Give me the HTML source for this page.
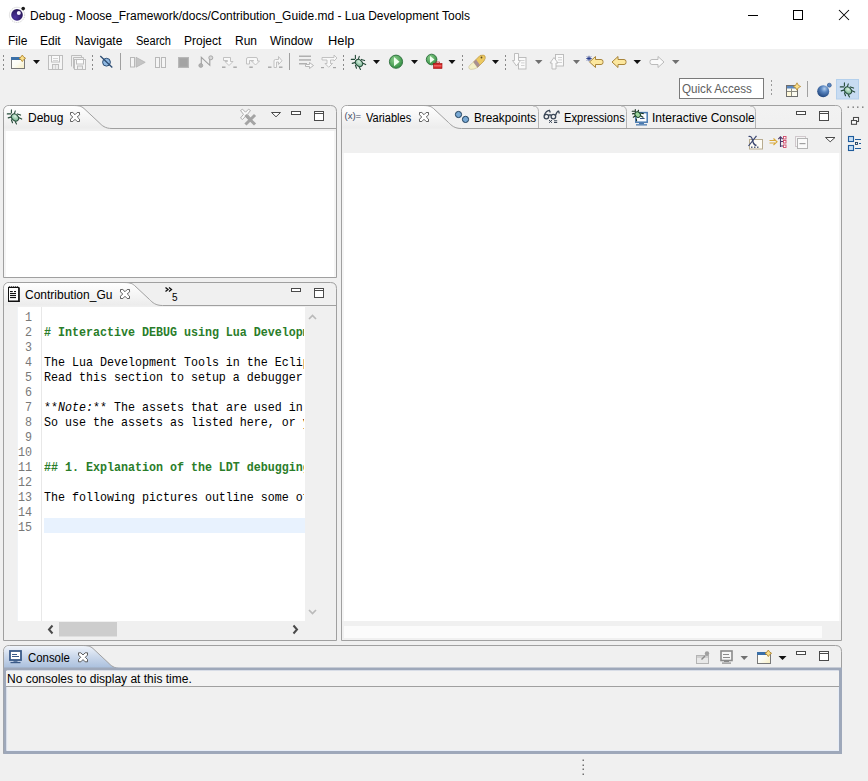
<!DOCTYPE html>
<html><head><meta charset="utf-8">
<style>
*{box-sizing:border-box;margin:0;padding:0}
html,body{width:868px;height:781px;overflow:hidden}
body{position:relative;background:#f0f0f0;font-family:"Liberation Sans",sans-serif;font-size:12px;color:#000}
.t{position:absolute;white-space:nowrap;line-height:1;transform-origin:0 0;z-index:2}
#g{position:absolute;left:0;top:0;z-index:1}
.ln{left:18px;width:14px;text-align:right;color:#787878}.tx{left:44px;width:259.8px;overflow:hidden}.h{color:#2a7d2a;font-weight:bold}
.m{font-family:"Liberation Mono",monospace;font-size:11.67px;position:absolute;white-space:pre;line-height:13.043px;z-index:2;transform:scaleY(1.15);transform-origin:0 0}
</style></head><body>
<svg id="g" width="868" height="781" viewBox="0 0 868 781">
<defs>
 <linearGradient id="tabsel" x1="0" y1="0" x2="0" y2="1">
  <stop offset="0" stop-color="#ffffff"/><stop offset="1" stop-color="#ececec"/>
 </linearGradient>
 <linearGradient id="tabun" x1="0" y1="0" x2="0" y2="1">
  <stop offset="0" stop-color="#f2f2f2"/><stop offset="1" stop-color="#f0f0f0"/>
 </linearGradient>
 <linearGradient id="tabblue" x1="0" y1="0" x2="0" y2="1">
  <stop offset="0" stop-color="#f0f4fa"/><stop offset="0.4" stop-color="#d0dced"/><stop offset="1" stop-color="#a8bedc"/>
 </linearGradient>
 <linearGradient id="newwin" x1="0" y1="0" x2="1" y2="1">
  <stop offset="0" stop-color="#ffffff"/><stop offset="0.5" stop-color="#fbfbf4"/><stop offset="1" stop-color="#f8eec0"/>
 </linearGradient>
 <radialGradient id="greenball" cx="0.4" cy="0.35" r="0.7">
  <stop offset="0" stop-color="#8fd08f"/><stop offset="1" stop-color="#2e8b3e"/>
 </radialGradient>
 <radialGradient id="bugbody" cx="0.4" cy="0.35" r="0.7">
  <stop offset="0" stop-color="#d8f0e0"/><stop offset="1" stop-color="#6fb08a"/>
 </radialGradient>
 <radialGradient id="blueball" cx="0.35" cy="0.3" r="0.75">
  <stop offset="0" stop-color="#a8c8ec"/><stop offset="1" stop-color="#2f5f9f"/>
 </radialGradient>
</defs>

<!-- title + menu white -->
<rect x="0" y="0" width="868" height="49" fill="#ffffff"/>

<!-- ============ DEBUG PANEL ============ -->
<path d="M3.5 277.5 V111.5 Q3.5 105.5 9.5 105.5 H330.5 Q336.5 105.5 336.5 111.5 V277.5 Z" fill="#f0f0f0" stroke="#a0a0a0"/>
<path d="M4 128.5 V111.5 Q4 106 9.5 106 H72 C79.0 105.5 81.0 106.0 84.0 108.5 L99.0 122.5 C102.0 125.5 105.0 128.5 112.0 128.5 Z" fill="url(#tabsel)"/>
<rect x="4" y="131" width="332" height="146" fill="#f5f5f5"/><rect x="6" y="131" width="328" height="146" fill="#ffffff"/>
<path d="M72 105.5 C79.0 105.5 81.0 106.0 84.0 108.5 L99.0 122.5 C102.0 125.5 105.0 128.5 112.0 128.5 H336" fill="none" stroke="#a0a0a0"/>

<!-- ============ EDITOR PANEL ============ -->
<path d="M3.5 640.5 V288.5 Q3.5 282.5 9.5 282.5 H330.5 Q336.5 282.5 336.5 288.5 V640.5 Z" fill="#f0f0f0" stroke="#a0a0a0"/>
<path d="M4 305.5 V288.5 Q4 283 9.5 283 H122.5 C129.5 282.5 131.5 283.0 134.5 285.5 L149.5 299.5 C152.5 302.5 155.5 305.5 162.5 305.5 Z" fill="url(#tabsel)"/>
<path d="M122.5 282.5 C129.5 282.5 131.5 283.0 134.5 285.5 L149.5 299.5 C152.5 302.5 155.5 305.5 162.5 305.5 H336" fill="none" stroke="#a0a0a0"/>
<rect x="17" y="307" width="288" height="314" fill="#ffffff"/>
<rect x="41" y="307" width="1" height="314" fill="#e8e8e8"/>
<rect x="17" y="307" width="1" height="314" fill="#f0f3f6"/>
<rect x="44" y="518" width="261" height="15" fill="#e8f2fe"/>

<!-- ============ VARIABLES PANEL ============ -->
<path d="M341.5 640.5 V111.5 Q341.5 105.5 347.5 105.5 H835.5 Q841.5 105.5 841.5 111.5 V640.5 Z" fill="#f0f0f0" stroke="#a0a0a0"/>
<path d="M342 128 H841 V111.5 Q841 106 835.5 106 H347.5 Q342 106 342 111.5 Z" fill="url(#tabun)"/>
<path d="M342 128.5 V111.5 Q342 106 347.5 106 H421.5 C428.5 105.5 430.5 106.0 433.5 108.5 L448.5 122.5 C451.5 125.5 454.5 128.5 461.5 128.5 Z" fill="url(#tabsel)"/>
<path d="M421.5 105.5 C428.5 105.5 430.5 106.0 433.5 108.5 L448.5 122.5 C451.5 125.5 454.5 128.5 461.5 128.5 H841" fill="none" stroke="#a0a0a0"/>
<path d="M533 106 Q538.5 106 538.5 111.5 V128" fill="none" stroke="#b4b4b4"/>
<path d="M621 106 Q626.5 106 626.5 111.5 V128" fill="none" stroke="#b4b4b4"/>
<path d="M750 106 Q755.5 106 755.5 111.5 V128" fill="none" stroke="#b4b4b4"/>
<rect x="342" y="153" width="499" height="468" fill="#f5f5f5"/><rect x="344" y="153" width="495" height="468" fill="#ffffff"/>
<rect x="344" y="626" width="478" height="12" fill="#fbfbfb"/>

<!-- ============ CONSOLE PANEL ============ -->
<path d="M3.5 753.5 V651.5 Q3.5 645.5 9.5 645.5 H835.5 Q841.5 645.5 841.5 651.5 V753.5 Z" fill="#f0f0f0" stroke="#a0a0a0"/>
<path d="M4 668.5 V651.5 Q4 646 9.5 646 H81 C88.0 645.5 90.0 646.0 93.0 648.5 L108.0 662.5 C111.0 665.5 114.0 668.5 121.0 668.5 Z" fill="url(#tabblue)"/>
<path d="M81 645.5 C88.0 645.5 90.0 646.0 93.0 648.5 L108.0 662.5 C111.0 665.5 114.0 668.5 121.0 668.5" fill="none" stroke="#a0a0a0"/>
<!-- blue content border -->
<path d="M5 669 H840.5 V752.5 H5 Z" fill="none" stroke="#9ea8ba" stroke-width="3"/>
<path d="M7 671 H838.5 V750.5 H7 Z" fill="none" stroke="#e8eef8" stroke-width="1"/>
<rect x="6" y="671" width="833" height="15" fill="#f3f3f3"/>
<rect x="6" y="686" width="833" height="1" fill="#a0a0a0"/>


<defs>
 <symbol id="bug" viewBox="0 0 16 16" overflow="visible">
  <g stroke="#244a38" stroke-width="1.1" stroke-linecap="round" fill="none">
   <path d="M4.4 0.4 V3.4"/><path d="M8.3 1.4 L7.4 4.2"/>
   <path d="M0.3 4.4 H3.6"/><path d="M10.3 4.4 L13.6 5.6"/>
   <path d="M1.2 8.4 L3.8 7.6"/><path d="M12 8.3 L14.7 9.6"/>
   <path d="M4.4 10.3 L5.5 13.3"/><path d="M8.3 12.2 L9.5 14.4"/>
  </g>
  <ellipse cx="8" cy="8" rx="4" ry="3.1" transform="rotate(45 8 8)" fill="url(#bugbody)" stroke="#244a38" stroke-width="1"/>
 </symbol>
 <symbol id="xclose" viewBox="0 0 10 10" overflow="visible">
  <path d="M0.5 0.5 H2.8 L5 2.7 L7.2 0.5 H9.5 V2.8 L7.3 5 L9.5 7.2 V9.5 H7.2 L5 7.3 L2.8 9.5 H0.5 V7.2 L2.7 5 L0.5 2.8 Z" fill="#fff" stroke="#454545" stroke-width="0.85"/>
 </symbol>
 <symbol id="minb" viewBox="0 0 10 4" overflow="visible">
  <rect x="0.5" y="0.5" width="9" height="3" fill="#fff" stroke="#4a4a4a"/>
 </symbol>
 <symbol id="maxb" viewBox="0 0 10 10" overflow="visible">
  <rect x="0.5" y="0.5" width="9" height="9" fill="#fff" stroke="#4a4a4a"/>
  <rect x="1" y="2" width="8" height="1" fill="#4a4a4a"/>
 </symbol>
 <symbol id="newwinS" viewBox="0 0 16 16" overflow="visible">
  <rect x="0.5" y="2.5" width="13" height="11" fill="url(#newwin)" stroke="#787878"/>
  <rect x="0" y="2" width="11" height="3" fill="#3b70a8"/>
  <path d="M11.3 0 L12.6 2 L14.6 3.3 L12.6 4.6 L11.3 6.6 L10 4.6 L8 3.3 L10 2 Z" fill="#fbe08a" stroke="#b58a32" stroke-width="0.9"/>
 </symbol>
</defs>

<!-- title icon -->
<radialGradient id="purp" cx="0.35" cy="0.7" r="0.8"><stop offset="0" stop-color="#4d33a0"/><stop offset="1" stop-color="#22124e"/></radialGradient>
<circle cx="17" cy="14.9" r="7.6" fill="#fff" stroke="#c4c4c4" stroke-width="0.8" stroke-dasharray="1.2 0.8"/>
<circle cx="17" cy="14.9" r="5.8" fill="url(#purp)"/>
<circle cx="18.8" cy="12.9" r="2" fill="#f2eeff"/>
<circle cx="23.2" cy="8.6" r="1.8" fill="#1c1c1c"/>
<!-- window controls -->
<rect x="748" y="15" width="10" height="1" fill="#000"/>
<rect x="793.5" y="10.5" width="9" height="9" fill="none" stroke="#000"/>
<path d="M839 10 L849 20 M849 10 L839 20" stroke="#000" stroke-width="1.05"/>

<!-- ===== TOOLBAR ROW 1 ===== -->
<g fill="#888888">
<rect x="3" y="55" width="1" height="2"/><rect x="3" y="59" width="1" height="2"/><rect x="3" y="64" width="1" height="2"/><rect x="3" y="68" width="1" height="2"/>
<rect x="92" y="55" width="1" height="2"/><rect x="92" y="59" width="1" height="2"/><rect x="92" y="64" width="1" height="2"/><rect x="92" y="68" width="1" height="2"/>
<rect x="343" y="55" width="1" height="2"/><rect x="343" y="59" width="1" height="2"/><rect x="343" y="64" width="1" height="2"/><rect x="343" y="68" width="1" height="2"/>
<rect x="462" y="55" width="1" height="2"/><rect x="462" y="59" width="1" height="2"/><rect x="462" y="64" width="1" height="2"/><rect x="462" y="68" width="1" height="2"/>
<rect x="505" y="55" width="1" height="2"/><rect x="505" y="59" width="1" height="2"/><rect x="505" y="64" width="1" height="2"/><rect x="505" y="68" width="1" height="2"/>
<rect x="771" y="80" width="1" height="2" fill="#9a9a9a"/><rect x="771" y="84" width="1" height="2" fill="#9a9a9a"/><rect x="771" y="89" width="1" height="2" fill="#9a9a9a"/><rect x="771" y="93" width="1" height="2" fill="#9a9a9a"/>
</g>
<!-- separators -->
<rect x="120" y="53" width="1" height="17" fill="#a0a0a0"/>
<rect x="289" y="53" width="1" height="17" fill="#a0a0a0"/>
<rect x="807" y="81" width="1" height="16" fill="#a0a0a0"/>

<!-- new -->
<use href="#newwinS" x="11" y="55" width="16" height="16"/>
<path d="M33 60 H40 L36.5 64 Z" fill="#111"/>
<!-- save (disabled) -->
<g stroke="#bebebe" fill="#f5f5f5" stroke-width="1">
 <rect x="48.5" y="55.5" width="14" height="14"/>
 <rect x="51.5" y="55.5" width="8" height="6.5" fill="#fbfbfb"/>
 <rect x="52.5" y="64.5" width="6" height="5" fill="#ececec"/>
 <path d="M71.5 66.5 V55.5 H81.5 V57.5" fill="none"/>
 <path d="M73.5 68.5 V57.5 H83.5 V59" fill="none"/>
 <rect x="74.5" y="59.5" width="11" height="10"/>
 <rect x="76.5" y="59.5" width="7" height="4.5" fill="#fbfbfb"/>
 <rect x="77.5" y="66" width="5" height="3.5" fill="#ececec"/>
</g>
<g fill="#d4d4d4"><rect x="53" y="58" width="5" height="1"/><rect x="53" y="60" width="5" height="1"/><rect x="55" y="65" width="1" height="4"/></g>
<!-- skip breakpoints -->
<circle cx="106.5" cy="62.2" r="3.9" fill="#8fb8e2" stroke="#2c4c72"/>
<path d="M100.3 56 L112.3 67.5" stroke="#2c4c72" stroke-width="1.3"/>
<!-- resume/suspend/terminate disabled -->
<rect x="130.5" y="57.5" width="4" height="9.5" fill="#f4f4f4" stroke="#b8b8b8"/>
<path d="M136 57.3 L145.2 62.3 L136 67.2 Z" fill="#c4c4c4" stroke="#b4b4b4" stroke-width="0.8"/>
<rect x="155.5" y="57.5" width="4" height="10" fill="#f4f4f4" stroke="#b8b8b8"/>
<rect x="161.5" y="57.5" width="4" height="10" fill="#f4f4f4" stroke="#b8b8b8"/>
<rect x="178.5" y="57.5" width="10" height="10" fill="#a8a8a8" stroke="#b8b8b8"/><rect x="180" y="59" width="7" height="7" fill="#a4a4a4"/>
<!-- disconnect -->
<path d="M201.3 64 V57.3 L209.8 65.3 V59" fill="none" stroke="#a0a0a0" stroke-width="1.1"/>
<circle cx="200.8" cy="65.5" r="2" fill="#b0b0b0" stroke="#9a9a9a" stroke-width="0.6"/>
<circle cx="210.8" cy="57.8" r="2" fill="#d8d8d8" stroke="#9a9a9a" stroke-width="0.8"/>
<!-- step into/over/return disabled -->
<g fill="#f8f8f8" stroke="#bcbcbc" stroke-width="0.9">
 <path d="M223.5 57.5 H230.5 V61.5 H233 L229 65.5 L225 61.5 H227.5 V60.5 H223.5 Z"/>
 <path d="M246.5 64 V59 Q246.5 57.5 248 57.5 H256 Q257.5 57.5 257.5 59 V61 H259.5 L255.5 65 L251.5 61 H253.5 V60.5 H249.5 V64 Z"/>
 <path d="M274 67.5 V61 Q274 59.5 275.5 59.5 H278.5 V56.5 L282 60.8 L278.5 64.5 V62 H276.5 V67.5 Z"/>
 <path d="M327 57.5 H334 V55 L337 58 L334 61 V60 H330.5 V63.5 H332.5 L328.7 67.3 L325 63.5 H327 V60 H322 V57.5 Z"/>
</g>
<g fill="#a6a6a6">
 <rect x="222" y="66.5" width="3.5" height="1.4"/><rect x="233.3" y="66.5" width="3.5" height="1.4"/>
 <rect x="249.3" y="66.5" width="3.5" height="1.4"/>
 <rect x="268" y="66.5" width="3.5" height="1.4"/><rect x="279" y="66.5" width="3.5" height="1.4"/>
 <rect x="321" y="67" width="3" height="1.2"/><rect x="333" y="67" width="3" height="1.2"/>
</g>
<!-- drop to frame -->
<g fill="#b0b0b0">
 <rect x="299" y="55.5" width="12" height="1.5"/><rect x="299" y="59.2" width="12" height="1.5"/><rect x="299" y="63" width="8" height="1.5"/>
</g>
<path d="M305.5 64.5 V66.5 H309.5 V68.5 L313.5 65.5 L309.5 62.5 V64.5 Z" fill="#f8f8f8" stroke="#b0b0b0" stroke-width="0.9"/>

<!-- debug bug -->
<use href="#bug" x="351" y="55" width="16" height="16"/>
<path d="M373 60 H380 L376.5 64 Z" fill="#111"/>
<!-- run -->
<circle cx="396" cy="61.7" r="6.6" fill="url(#greenball)" stroke="#2c6e3c" stroke-width="0.9"/>
<path d="M394 57 L399.5 61.7 L394 66.3 Z" fill="#f0fff0"/>
<path d="M411 60 H418 L414.5 64 Z" fill="#111"/>
<!-- external tools -->
<circle cx="431.6" cy="59.5" r="5.3" fill="url(#greenball)" stroke="#2c6e3c" stroke-width="0.9"/>
<path d="M430 56 L434.5 59.5 L430 63 Z" fill="#f0fff0"/>
<rect x="433.5" y="63.5" width="8.5" height="5" fill="#d42828" stroke="#a01010" stroke-width="0.6"/>
<rect x="436" y="62" width="3.5" height="1.5" fill="none" stroke="#b01818" stroke-width="0.7"/>
<rect x="434" y="65.5" width="7.5" height="0.8" fill="#ff9a9a"/>
<path d="M448.5 60 H455.5 L452 64 Z" fill="#111"/>
<!-- marker -->
<path d="M473.5 62 L480 55.5 Q484 54.5 485 56 Q486 58 484 61 L477.5 67.5 Z" fill="#ecc860" stroke="#b89440" stroke-width="0.7"/>
<path d="M473.5 62 L477.5 67.5 L474 69 Q470 70 469 68.5 Q468 67 470 65 Z" fill="#f4f0c8" stroke="#c8c090" stroke-width="0.6"/>
<path d="M473.5 62 L476 59.5 L480 65 L477.5 67.5 Z" fill="#a89092"/>
<circle cx="481.5" cy="57.5" r="0.9" fill="#5a4a20"/>
<path d="M492 60 H499 L495.5 64 Z" fill="#111"/>
<!-- next/prev annotation disabled -->
<g fill="#fafafa" stroke="#b8b8b8" stroke-width="0.9">
 <rect x="518.5" y="57.5" width="7.5" height="11.5"/>
 <path d="M514.5 53.5 H518.5 V60.5 H520.5 L516.5 66 L512.5 60.5 H514.5 Z"/>
 <rect x="555.5" y="54.5" width="8" height="11.5"/>
 <path d="M552 69 V63 H550 L554 57.5 L558 63 H556 V69 Z"/>
</g>
<g fill="#c8c8c8">
 <rect x="521" y="60" width="3.5" height="0.8"/><rect x="521" y="62.5" width="3.5" height="0.8"/><rect x="521" y="65" width="3.5" height="0.8"/>
 <rect x="558" y="57" width="4" height="0.8"/><rect x="558" y="59.5" width="4" height="0.8"/><rect x="558" y="62" width="4" height="0.8"/>
</g>
<path d="M535 60 H542.5 L538.7 64 Z" fill="#707070"/>
<path d="M573 60 H580 L576.5 64 Z" fill="#707070"/>
<!-- last edit / back / forward -->
<g stroke="#243a8a" stroke-width="0.9">
 <path d="M589 55.8 V61.3 M586.3 58.5 H591.7 M587 56.5 L591 60.5 M591 56.5 L587 60.5"/>
</g>
<path d="M589.5 62 L595.5 56.5 V59.5 H601 Q603 59.5 603 61.5 V62.5 Q603 64.5 601 64.5 H595.5 V67.5 Z" fill="#fce79e" stroke="#a8843a" stroke-width="1"/>
<path d="M612 62 L618 56.5 V59.5 H624 Q626 59.5 626 61.5 V62.5 Q626 64.5 624 64.5 H618 V67.5 Z" fill="#fce79e" stroke="#a8843a" stroke-width="1"/>
<path d="M633.5 60 H641 L637.2 64 Z" fill="#111"/>
<path d="M664 62 L658 56.5 V59.5 H652 Q650 59.5 650 61.5 V62.5 Q650 64.5 652 64.5 H658 V67.5 Z" fill="#fafafa" stroke="#b4b4b4" stroke-width="0.9"/>
<path d="M672 60 H679.5 L675.7 64 Z" fill="#707070"/>

<!-- ===== TOOLBAR ROW 2 ===== -->
<rect x="679.5" y="78.5" width="84" height="20" fill="#fff" stroke="#7a7a7a"/>
<!-- open perspective -->
<rect x="786.5" y="85.5" width="11" height="11" fill="#fbfaf0" stroke="#6e6e6e"/>
<rect x="787" y="86" width="10" height="2.5" fill="#5a88c0"/>
<path d="M791.5 88.5 V96 M787 91.5 H797" stroke="#8a8a80"/>
<rect x="787" y="92" width="4" height="4" fill="#fff8d8"/>
<path d="M797 82.8 L798.3 85.2 L800.7 86.5 L798.3 87.8 L797 90.2 L795.7 87.8 L793.3 86.5 L795.7 85.2 Z" fill="#fbe08a" stroke="#b58a32" stroke-width="0.8"/>
<!-- lua perspective ball -->
<radialGradient id="ball2" cx="0.6" cy="0.3" r="0.8"><stop offset="0" stop-color="#b4d0f0"/><stop offset="0.35" stop-color="#5a86c0"/><stop offset="1" stop-color="#173a70"/></radialGradient>
<circle cx="823.2" cy="91.2" r="6" fill="url(#ball2)"/>
<circle cx="829.3" cy="85.2" r="2" fill="#5a86c0" stroke="#2a5088" stroke-width="0.6"/>
<!-- debug perspective selected -->
<rect x="836.5" y="79.5" width="22" height="19.5" fill="#c8dcf2" stroke="#b4d0ec"/>
<use href="#bug" x="840" y="82.5" width="16" height="16"/>

<!-- ===== DEBUG PANEL header ===== -->
<use href="#bug" x="7" y="109.5" width="16" height="16"/>
<use href="#xclose" x="70" y="112" width="10" height="10"/>
<path d="M240.5 110.5 L242.5 109.2 L245.5 112.2 L248.5 109.2 L250.5 110.5 L247.5 114.3 L250.5 118 L248.5 119.5 L245.5 116.3 L242.5 119.5 L240.5 118 L243.5 114.3 Z" fill="#fafafa" stroke="#b0b0b0" stroke-width="1"/>
<path d="M246.5 116 L254 123.5 M254 116 L246.5 123.5" stroke="#a4a4a4" stroke-width="3" stroke-linecap="square"/>
<path d="M271.5 112.5 H280.5 L276 116.8 Z" fill="#fff" stroke="#4a4a4a"/>
<use href="#minb" x="291" y="111" width="10" height="4"/>
<use href="#maxb" x="314" y="111" width="10" height="10"/>

<!-- ===== EDITOR PANEL header ===== -->
<g>
 <rect x="8.5" y="287.5" width="10.5" height="14" fill="#fff" stroke="#111" stroke-width="1"/>
 <rect x="18.2" y="288" width="1.4" height="14" fill="#111"/>
 <rect x="8.5" y="300.5" width="11" height="1.5" fill="#111"/>
 <g fill="#111">
  <circle cx="9.5" cy="287" r="0.8"/><circle cx="11.5" cy="287" r="0.8"/><circle cx="13.5" cy="287" r="0.8"/><circle cx="15.5" cy="287" r="0.8"/><circle cx="17.5" cy="287" r="0.8"/>
  <rect x="10" y="291" width="2.8" height="1.1"/><rect x="14" y="291" width="2" height="1.1"/>
  <rect x="10" y="293" width="6" height="1.1"/><rect x="10" y="295" width="6" height="1.1"/><rect x="10" y="297" width="6" height="1.1"/>
 </g>
</g>
<use href="#xclose" x="120" y="289" width="10" height="10"/>
<path d="M165.5 287.5 L168 289.5 L165.5 291.5 M169 287.5 L171.5 289.5 L169 291.5" fill="none" stroke="#111" stroke-width="1.3"/>
<use href="#minb" x="291" y="288" width="10" height="4"/>
<use href="#maxb" x="314" y="288" width="10" height="10"/>
<!-- editor scroll arrows -->
<path d="M309 319 L312.5 315.5 L316 319" fill="none" stroke="#bababa" stroke-width="1.7"/>
<path d="M309 610 L312.5 613.5 L316 610" fill="none" stroke="#bababa" stroke-width="1.7"/>
<path d="M52.5 625.5 L49 629.5 L52.5 633.5" fill="none" stroke="#4a4a4a" stroke-width="2"/>
<path d="M293.5 625.5 L297 629.5 L293.5 633.5" fill="none" stroke="#4a4a4a" stroke-width="2"/>
<rect x="59" y="622" width="58" height="14.5" fill="#cdcdcd"/>

<!-- ===== VARIABLES PANEL header ===== -->
<use href="#xclose" x="419" y="112" width="10" height="10"/>
<circle cx="458.5" cy="114.5" r="3.1" fill="#79a9d4" stroke="#1f3f5c" stroke-width="1"/>
<circle cx="465.5" cy="119.4" r="3.1" fill="#79a9d4" stroke="#1f3f5c" stroke-width="1"/>
<g fill="none" stroke="#3a4656" stroke-width="1.3">
 <circle cx="546.4" cy="116.6" r="2.3"/><circle cx="553.4" cy="116.6" r="2.3"/>
 <path d="M548.6 115 H551.2 M544.2 115.5 Q546 110.6 549.3 110.3 L550.3 112.6 M555.6 115.3 Q557 111 558.6 111.2 L559.4 113.5"/>
</g>
<g fill="none" stroke="#3a4656" stroke-width="1">
 <path d="M549 120 L552 122.8 M552 120 L549 122.8 M554 120.8 H557.2 M554 122.5 H557.2"/>
</g>
<!-- interactive console icon -->
<rect x="635.8" y="112.6" width="11.4" height="9.6" fill="#fafcff" stroke="#4a7ab0" stroke-width="1.5"/>
<rect x="639" y="123" width="5" height="1.2" fill="#4a7ab0"/>
<rect x="636" y="124.2" width="11" height="1.3" fill="#4a7ab0"/>
<rect x="640" y="118" width="4.6" height="1" fill="#30507a"/>
<g stroke="#1a3322" stroke-width="1.1" stroke-linecap="round">
 <path d="M635.3 109.6 V112 M638.5 110.2 L637.8 112 M632.2 111.3 H634.5 M632.5 113.9 L634.4 113.4 M640.6 113 L643.3 113.6 M633.3 117.2 L634.8 116.2 M641 116 L643 117.2 M636.3 119 L636.6 120.8"/>
</g>
<ellipse cx="637.7" cy="114.6" rx="3" ry="2.5" transform="rotate(45 637.7 114.6)" fill="#9cd49c" stroke="#1f4a28" stroke-width="1"/>
<use href="#minb" x="796" y="111" width="10" height="4"/>
<use href="#maxb" x="819" y="111" width="10" height="10"/>

<!-- variables toolbar -->
<rect x="749.5" y="139.5" width="13" height="9.5" fill="#fdfcf6" stroke="#b8ac90" stroke-width="1"/>
<path d="M748.5 136.5 Q751.5 135.5 752.5 140 Q753.5 145 756.5 145.5" fill="none" stroke="#3a4670" stroke-width="1.3"/>
<path d="M756.5 135.8 L748.5 146" fill="none" stroke="#3a4670" stroke-width="1.2"/>
<g fill="#5a6480"><rect x="751" y="146.5" width="1.5" height="1.5"/><rect x="754" y="146.5" width="1.5" height="1.5"/><rect x="757" y="146.5" width="1.5" height="1.5"/></g>
<path d="M769.5 140.5 H775 M769.5 143 H775 M773.5 138.5 L777 141.8 L773.5 145" fill="none" stroke="#d8a838" stroke-width="1.1"/>
<path d="M780.5 147 V137 M778.3 139.2 L780.5 136.8 L782.7 139.2 M780.5 141.5 H783.5 M780.5 146 H783.5" fill="none" stroke="#4a3a6a" stroke-width="1.1"/>
<g fill="#fff" stroke="#d04a6a" stroke-width="0.9"><rect x="783.5" y="136.5" width="2.5" height="2.5"/><rect x="783.5" y="140.5" width="2.5" height="2.5"/><rect x="783.5" y="145" width="2.5" height="2.5"/></g>
<rect x="795.5" y="136.5" width="10" height="10" fill="#f4f4f4" stroke="#d0c8cc"/>
<rect x="797.5" y="138.5" width="10" height="10" fill="#fafafa" stroke="#b4b4b4"/>
<rect x="799.5" y="143" width="6" height="1.2" fill="#a0a0a0"/>
<path d="M825.5 137.5 H835 L830.2 141.8 Z" fill="#fff" stroke="#4a4a4a"/>

<!-- ===== RIGHT TRIM ===== -->
<g fill="#707070"><rect x="847.5" y="106.5" width="1.5" height="1.3"/><rect x="852.5" y="106.5" width="1.5" height="1.3"/><rect x="857" y="106.5" width="1.5" height="1.3"/><rect x="862" y="106.5" width="1.5" height="1.3"/></g>
<rect x="853.5" y="117.5" width="5" height="4" fill="#fff" stroke="#4a4a4a" stroke-width="1.1"/>
<rect x="851.5" y="120.5" width="5" height="3.8" fill="#fff" stroke="#4a4a4a" stroke-width="1.1"/>
<g fill="#c6def4" stroke="#1f5c9c" stroke-width="1.1">
 <rect x="848.5" y="136.5" width="5" height="5"/><rect x="848.5" y="145.5" width="5" height="5"/>
</g>
<g fill="#1f5c9c">
 <rect x="855" y="139" width="6" height="1"/><rect x="855" y="148" width="6" height="1"/>
 <rect x="859" y="143" width="2" height="1"/>
</g>
<rect x="855.5" y="142.5" width="2" height="2" fill="none" stroke="#1f4060" stroke-width="0.9"/>

<!-- ===== CONSOLE PANEL header ===== -->
<rect x="10" y="651" width="11" height="9" fill="#fff" stroke="#3a5a88" stroke-width="1.8"/>
<rect x="12" y="654" width="5" height="1" fill="#3a5a88"/>
<rect x="12" y="656" width="7" height="1" fill="#3a5a88"/>
<rect x="13.5" y="660.5" width="4" height="1.2" fill="#3a5a88"/>
<rect x="10.5" y="662" width="10" height="1.2" fill="#3a5a88"/>
<use href="#xclose" x="78" y="652.3" width="10" height="10"/>
<!-- pin -->
<rect x="696.5" y="655.5" width="12" height="8" fill="#e8e8e8" stroke="#b4b4b4"/>
<rect x="697" y="656" width="11" height="2" fill="#d0d0d0"/>
<path d="M701.5 659.5 L705 656" stroke="#8a8a8a" stroke-width="1.4"/>
<circle cx="707" cy="653.5" r="2.2" fill="#a0a0a0"/>
<!-- display console -->
<rect x="721" y="651" width="11" height="9.5" fill="#f6f6f6" stroke="#8a8a8a" stroke-width="1.6"/>
<rect x="723" y="654" width="6" height="1" fill="#8a8a8a"/>
<rect x="723" y="657" width="7" height="1" fill="#8a8a8a"/>
<rect x="724" y="661" width="5" height="1" fill="#8a8a8a"/>
<rect x="722" y="662.5" width="9" height="1.2" fill="#8a8a8a"/>
<path d="M740.5 656 H748 L744.2 660 Z" fill="#707070"/>
<use href="#newwinS" x="757" y="650" width="16" height="16"/>
<path d="M778.5 656 H786.5 L782.5 660 Z" fill="#111"/>
<use href="#minb" x="796" y="651" width="10" height="4"/>
<use href="#maxb" x="819" y="651" width="10" height="10"/>

<!-- bottom status handle -->
<g fill="#707070"><rect x="582.5" y="759.5" width="1.5" height="1.5"/><rect x="582.5" y="764.5" width="1.5" height="1.5"/><rect x="582.5" y="768.5" width="1.5" height="1.5"/><rect x="582.5" y="773.5" width="1.5" height="1.5"/></g>
</svg>

<div class="t" id="title" style="left:30px;top:10px">Debug - Moose_Framework/docs/Contribution_Guide.md - Lua Development Tools</div>
<div class="t menu" style="left:8px;top:35px">File</div>
<div class="t menu" style="left:40px;top:35px">Edit</div>
<div class="t menu" style="left:75px;top:35px">Navigate</div>
<div class="t menu" style="left:135.5px;top:35px;transform:scaleX(0.92)">Search</div>
<div class="t menu" style="left:184px;top:35px">Project</div>
<div class="t menu" style="left:235px;top:35px">Run</div>
<div class="t menu" style="left:270px;top:35px">Window</div>
<div class="t menu" style="left:328px;top:35px;transform:scaleX(1.07)">Help</div>

<div class="t" style="left:682px;top:83px;color:#606060;transform:scaleX(0.97)">Quick Access</div>

<div class="t" id="tdebug" style="left:28px;top:112px">Debug</div>
<div class="t" id="xeq" style="left:344.5px;top:111.3px;font-size:9.5px;color:#3e4a64">(x)=</div>
<div class="t" id="tvar" style="left:365.5px;top:112px;transform:scaleX(0.92)">Variables</div>
<div class="t" id="tbp" style="left:474px;top:112px;transform:scaleX(0.98)">Breakpoints</div>
<div class="t" id="texp" style="left:563.5px;top:112px;transform:scaleX(0.93)">Expressions</div>
<div class="t" id="tic" style="left:652px;top:112px">Interactive Console</div>
<div class="t" id="tcg" style="left:25px;top:289px">Contribution_Gu</div>
<div class="t" id="five" style="left:172px;top:293px;font-size:10px">5</div>
<div class="t" id="tcon" style="left:27.5px;top:652px;transform:scaleX(0.95)">Console</div>
<div class="t" id="tnoc" style="left:7px;top:673px">No consoles to display at this time.</div>

<div class="m ln" style="top:311px">1</div>
<div class="m ln" style="top:326px">2</div>
<div class="m tx" style="top:326px"><span class="h"># Interactive DEBUG using Lua Development Tools</span></div>
<div class="m ln" style="top:341px">3</div>
<div class="m ln" style="top:356px">4</div>
<div class="m tx" style="top:356px">The Lua Development Tools in the Eclipse IDE</div>
<div class="m ln" style="top:371px">5</div>
<div class="m tx" style="top:371px">Read this section to setup a debugger</div>
<div class="m ln" style="top:386px">6</div>
<div class="m ln" style="top:401px">7</div>
<div class="m tx" style="top:401px">**<i>Note:</i>** The assets that are used in</div>
<div class="m ln" style="top:416px">8</div>
<div class="m tx" style="top:416px">So use the assets as listed here, or you</div>
<div class="m ln" style="top:431px">9</div>
<div class="m ln" style="top:446px">10</div>
<div class="m ln" style="top:461px">11</div>
<div class="m tx" style="top:461px"><span class="h">## 1. Explanation of the LDT debugging</span></div>
<div class="m ln" style="top:476px">12</div>
<div class="m ln" style="top:491px">13</div>
<div class="m tx" style="top:491px">The following pictures outline some of</div>
<div class="m ln" style="top:506px">14</div>
<div class="m ln" style="top:521px">15</div>
</body></html>
